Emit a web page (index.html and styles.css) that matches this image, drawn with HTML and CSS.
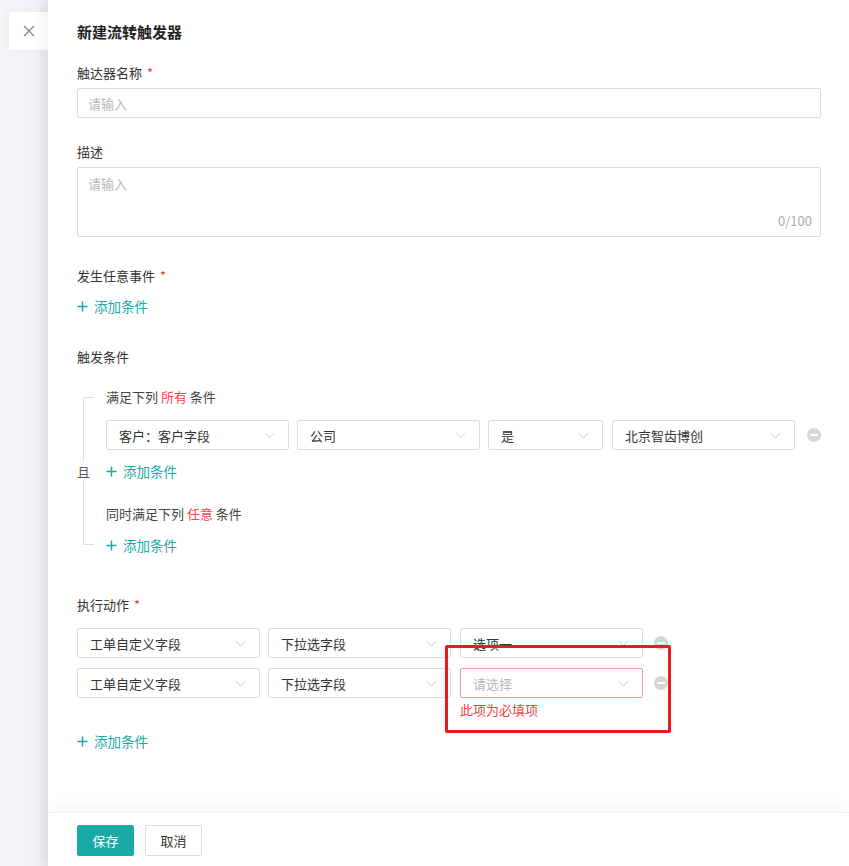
FILE: index.html
```html
<!DOCTYPE html>
<html lang="zh">
<head>
<meta charset="utf-8">
<title>新建流转触发器</title>
<link rel="stylesheet" href="styles.css">
</head>
<body>
<div class="page">
  <div class="backdrop">
    <button class="close" aria-label="关闭">
      <svg width="14" height="14" viewBox="0 0 14 14"><path d="M2 2L12 12M12 2L2 12" stroke="#888" stroke-width="1.3" fill="none"/></svg>
    </button>
  </div>
  <div class="drawer">
    <div class="content">
      <h1 class="title">新建流转触发器</h1>

      <div class="label">触达器名称 <span class="req">*</span></div>
      <div class="input"><span class="ph">请输入</span></div>

      <div class="label l-desc">描述</div>
      <div class="textarea">
        <span class="ph">请输入</span>
        <span class="count">0/100</span>
      </div>

      <div class="label l-event">发生任意事件 <span class="req">*</span></div>
      <div class="add a-event"><svg class="plus" viewBox="0 0 12 12"><path d="M6 0.5V11.5M0.5 6H11.5" stroke="#1aa9a6" stroke-width="1.6"/></svg>添加条件</div>

      <div class="label l-trig">触发条件</div>
      <div class="group">
        <div class="bracket"><span class="and">且</span></div>
        <div class="group-body">
          <div class="sub-label">满足下列 <span class="hl">所有</span> 条件</div>
          <div class="row cond-row">
            <div class="select w183"><span>客户：客户字段</span><svg class="chev" viewBox="0 0 12 8"><path d="M1 1.5L6 6.5L11 1.5" stroke="#c4c4c4" fill="none" stroke-width="1"/></svg></div>
            <div class="select w183"><span>公司</span><svg class="chev" viewBox="0 0 12 8"><path d="M1 1.5L6 6.5L11 1.5" stroke="#c4c4c4" fill="none" stroke-width="1"/></svg></div>
            <div class="select w115"><span>是</span><svg class="chev" viewBox="0 0 12 8"><path d="M1 1.5L6 6.5L11 1.5" stroke="#c4c4c4" fill="none" stroke-width="1"/></svg></div>
            <div class="select w183"><span>北京智齿博创</span><svg class="chev" viewBox="0 0 12 8"><path d="M1 1.5L6 6.5L11 1.5" stroke="#c4c4c4" fill="none" stroke-width="1"/></svg></div>
            <span class="minus"></span>
          </div>
          <div class="add a-sub"><svg class="plus" viewBox="0 0 12 12"><path d="M6 0.5V11.5M0.5 6H11.5" stroke="#1aa9a6" stroke-width="1.6"/></svg>添加条件</div>
          <div class="sub-label s2">同时满足下列 <span class="hl">任意</span> 条件</div>
          <div class="add a-sub"><svg class="plus" viewBox="0 0 12 12"><path d="M6 0.5V11.5M0.5 6H11.5" stroke="#1aa9a6" stroke-width="1.6"/></svg>添加条件</div>
        </div>
      </div>

      <div class="label l-act">执行动作 <span class="req">*</span></div>
      <div class="row act-row r1">
        <div class="select w183"><span>工单自定义字段</span><svg class="chev" viewBox="0 0 12 8"><path d="M1 1.5L6 6.5L11 1.5" stroke="#c4c4c4" fill="none" stroke-width="1"/></svg></div>
        <div class="select w183"><span>下拉选字段</span><svg class="chev" viewBox="0 0 12 8"><path d="M1 1.5L6 6.5L11 1.5" stroke="#c4c4c4" fill="none" stroke-width="1"/></svg></div>
        <div class="select w183"><span>选项一</span><svg class="chev" viewBox="0 0 12 8"><path d="M1 1.5L6 6.5L11 1.5" stroke="#c4c4c4" fill="none" stroke-width="1"/></svg></div>
        <span class="minus"></span>
      </div>
      <div class="row act-row r2">
        <div class="select w183"><span>工单自定义字段</span><svg class="chev" viewBox="0 0 12 8"><path d="M1 1.5L6 6.5L11 1.5" stroke="#c4c4c4" fill="none" stroke-width="1"/></svg></div>
        <div class="select w183"><span>下拉选字段</span><svg class="chev" viewBox="0 0 12 8"><path d="M1 1.5L6 6.5L11 1.5" stroke="#c4c4c4" fill="none" stroke-width="1"/></svg></div>
        <div class="field-col">
          <div class="select w183 err"><span class="ph">请选择</span><svg class="chev" viewBox="0 0 12 8"><path d="M1 1.5L6 6.5L11 1.5" stroke="#c4c4c4" fill="none" stroke-width="1"/></svg></div>
          <div class="err-msg">此项为必填项</div>
        </div>
        <span class="minus"></span>
      </div>
      <div class="add a-act"><svg class="plus" viewBox="0 0 12 12"><path d="M6 0.5V11.5M0.5 6H11.5" stroke="#1aa9a6" stroke-width="1.6"/></svg>添加条件</div>
    </div>
    <div class="footer">
      <button class="btn primary">保存</button>
      <button class="btn">取消</button>
    </div>
  </div>
</div>
<div class="annot"></div>
</body>
</html>
```

FILE: styles.css
```css
* { box-sizing: border-box; }
html, body { margin: 0; padding: 0; }
body {
  width: 849px;
  height: 866px;
  overflow: hidden;
  font-family: "Noto Sans CJK SC", "Noto Sans", sans-serif;
  color: #333;
  font-size: 13px;
  background: #f3f4f7;
  position: relative;
}
.page { display: flex; height: 866px; width: 849px; }
.backdrop {
  width: 48px;
  flex: none;
  padding-top: 12px;
  padding-left: 9px;
  background: linear-gradient(to right, #f4f5f8 0, #f1f2f5 70%, #e9eaee 100%);
}
.close {
  width: 39px;
  height: 38px;
  border: none;
  background: #fff;
  display: flex;
  align-items: center;
  justify-content: center;
  padding: 0;
  box-shadow: -2px 0 6px rgba(0,0,0,0.04);
}
.drawer {
  flex: 1;
  min-width: 0;
  background: #fff;
  display: flex;
  flex-direction: column;
  box-shadow: -4px 0 12px rgba(0,0,0,0.06);
  position: relative;
}
.content {
  flex: 1;
  min-width: 0;
  padding: 22px 28px 0 29px;
}
.title {
  margin: 0;
  font-size: 15px;
  font-weight: 700;
  line-height: 20px;
  color: #222;
}
.label {
  line-height: 20px;
  font-size: 13px;
  color: #333;
  margin-top: 21px;
  margin-bottom: 5px;
}
.req { color: #f5393a; margin-left: 2px; }
.input {
  height: 30px;
  border: 1px solid #dcdcdc;
  border-radius: 2px;
  padding: 0 10px;
  display: flex;
  align-items: center;
}
.ph { color: #b8b8b8; }
.l-desc { margin-top: 24px; }
.textarea {
  height: 70px;
  border: 1px solid #dcdcdc;
  border-radius: 2px;
  padding: 6px 10px;
  display: flex;
  flex-direction: column;
  justify-content: space-between;
}
.count { align-self: flex-end; color: #aaa; margin-right: -2px; }
.l-event { margin-top: 29px; margin-bottom: 10px; }
.add {
  display: flex;
  align-items: center;
  color: #1aa9a6;
  line-height: 20px;
  font-size: 13.5px;
}
.plus { width: 11px; height: 11px; margin-right: 6px; }
.l-trig { margin-top: 31px; margin-bottom: 20px; }
.group { display: flex; }
.bracket {
  width: 11px;
  flex: none;
  margin: 10px 12px 10px 6px;
  border: 1px solid #dedede;
  border-right: none;
  display: flex;
  align-items: center;
}
.and {
  background: #fff;
  margin-left: -7px;
  line-height: 18px;
  color: #555;
  padding: 2px 0 0;
}
.group-body { flex: 1; min-width: 0; }
.sub-label { line-height: 20px; color: #444; }
.hl { color: #f04848; }
.row { display: flex; align-items: center; }
.cond-row { margin-top: 13px; margin-bottom: 11px; }
.cond-row .select + .select { margin-left: 8px; }
.cond-row .w115, .cond-row .w115 + .select { margin-left: 9px; }
.a-sub { margin-bottom: 23px; }
.a-sub:last-child { margin-bottom: 0; }
.s2 { margin-bottom: 11px; }
.select {
  height: 30px;
  border: 1px solid #dcdcdc;
  border-radius: 2px;
  padding: 0 13px 0 12px;
  display: flex;
  align-items: center;
  justify-content: space-between;
  color: #333;
  flex: none;
}
.w183 { width: 183px; }
.w115 { width: 115px; }
.chev { width: 11px; height: 7px; }
.minus {
  width: 14px;
  height: 14px;
  border-radius: 50%;
  background: #d6d6d6;
  margin-left: 12px;
  position: relative;
  flex: none;
}
.minus::after {
  content: "";
  position: absolute;
  left: 3px;
  right: 3px;
  top: 6px;
  height: 2px;
  background: #fff;
}
.l-act { margin-top: 40px; margin-bottom: 13px; }
.act-row { gap: 8px; }
.act-row .select:nth-child(2) + .select, .act-row .field-col { margin-left: 1px; }
.act-row .minus { margin-left: 3px; }
.r2 { margin-top: 10px; align-items: flex-start; }
.r2 .minus { margin-top: 8px; }
.field-col { display: flex; flex-direction: column; }
.select.err { border-color: #f29a9a; }
.err-msg {
  color: #f23c3c;
  line-height: 16px;
  margin-top: 4px;
  font-size: 13px;
}
.a-act { margin-top: 13px; }
.footer {
  height: 54px;
  flex: none;
  border-top: 1px solid #efefef;
  box-shadow: 0 -6px 14px rgba(0,0,0,0.03);
  padding: 12px 0 0 29px;
  display: flex;
  gap: 11px;
  align-items: flex-start;
}
.btn {
  height: 31px;
  width: 57px;
  border: 1px solid #dcdcdc;
  border-radius: 2px;
  background: #fff;
  color: #333;
  font-family: inherit;
  font-size: 13px;
  padding: 0;
}
.btn.primary {
  background: #19aaa7;
  border-color: #19aaa7;
  color: #fff;
}
.annot {
  position: absolute;
  left: 445px;
  top: 645px;
  width: 226px;
  height: 88px;
  border: 3px solid #ec1c1c;
  border-radius: 2px;
}
```
